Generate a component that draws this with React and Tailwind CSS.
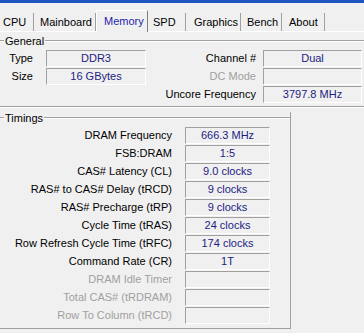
import React from "react";

const Box = ({ children, w }) => (
  <div
    className={
      "h-[17px] shrink-0 border border-t-[#a0a0a0] border-l-[#a0a0a0] border-r-white border-b-white flex items-center justify-center text-[#1c1c84] leading-none " +
      w
    }
  >
    {children}
  </div>
);

const tabs = [
  { name: "CPU", w: "w-[34px]", pl: "pl-[3px]" },
  { name: "Mainboard", w: "w-[62px]", pl: "pl-[6px]" },
  { name: "Memory", w: "w-[52px]", pl: "pl-[7px]", sel: true },
  { name: "SPD", w: "w-[38px]", pl: "pl-[5px]" },
  { name: "Graphics", w: "w-[55px]", pl: "pl-[8px]" },
  { name: "Bench", w: "w-[41px]", pl: "pl-[6px]" },
  { name: "About", w: "w-[43px]", pl: "pl-[7px]" },
];

const timings = [
  ["DRAM Frequency", "666.3 MHz"],
  ["FSB:DRAM", "1:5"],
  ["CAS# Latency (CL)", "9.0 clocks"],
  ["RAS# to CAS# Delay (tRCD)", "9 clocks"],
  ["RAS# Precharge (tRP)", "9 clocks"],
  ["Cycle Time (tRAS)", "24 clocks"],
  ["Row Refresh Cycle Time (tRFC)", "174 clocks"],
  ["Command Rate (CR)", "1T"],
  ["DRAM Idle Timer", "", true],
  ["Total CAS# (tRDRAM)", "", true],
  ["Row To Column (tRCD)", "", true],
];

const Header = ({ title }) => (
  <div className="h-[12px] flex items-center">
    <div className="w-[4px] h-[2px] border-t border-t-[#a0a0a0] border-b border-b-white" />
    <span className="px-[1px] leading-none text-black">{title}</span>
    <div className="flex-1 h-[2px] border-t border-t-[#a0a0a0] border-b border-b-white" />
  </div>
);

export default function App() {
  return (
    <div className="w-[364px] h-[333px] overflow-hidden bg-[#f0f0f0] font-['Liberation_Sans',Arial,sans-serif] text-[11px] text-black">
      <div className="h-[3px] bg-[#1f55c0]" />
      <div className="h-[28px] flex items-end">
        {tabs.map((t) =>
          t.sel ? (
            <div
              key={t.name}
              className={
                "h-[22px] flex items-center border-t border-l border-t-white border-l-white border-r border-r-[#808080] text-[#2424a8] -mb-px bg-[#f0f0f0] relative z-10 " +
                t.w +
                " " +
                t.pl
              }
            >
              <span className="leading-none pb-[1px]">{t.name}</span>
            </div>
          ) : (
            <div
              key={t.name}
              className={"h-[18px] flex items-center border-r border-r-[#a0a0a0] " + t.w + " " + t.pl}
            >
              <span className="leading-none pt-[1px]">{t.name}</span>
            </div>
          )
        )}
      </div>
      <div className="border-t border-t-white">
        <div className="mt-[3px] pb-[3px] border-b border-b-[#a0a0a0]">
          <Header title="General" />
          <div className="mt-[3px] flex flex-col gap-px">
            <div className="h-[17px] flex items-center">
              <div className="w-[33px] text-right">Type</div>
              <div className="w-[13px]" />
              <Box w="w-[100px]">DDR3</Box>
              <div className="flex-1 text-right pr-[7px]">Channel #</div>
              <Box w="w-[99px]">Dual</Box>
              <div className="w-[2px]" />
            </div>
            <div className="h-[17px] flex items-center">
              <div className="w-[33px] text-right">Size</div>
              <div className="w-[13px]" />
              <Box w="w-[100px]">16 GBytes</Box>
              <div className="flex-1 text-right pr-[7px] text-[#a0a0a0]">DC Mode</div>
              <Box w="w-[99px]"></Box>
              <div className="w-[2px]" />
            </div>
            <div className="h-[17px] flex items-center">
              <div className="flex-1 text-right pr-[7px]">Uncore Frequency</div>
              <Box w="w-[99px]">3797.8 MHz</Box>
              <div className="w-[2px]" />
            </div>
          </div>
        </div>
        <div className="h-px bg-white" />
        <div className="mt-[4px] w-[291px] border-r border-r-[#a0a0a0] border-b border-b-[#a0a0a0] pb-[4px]">
          <Header title="Timings" />
          <div className="mt-[3px] flex flex-col gap-px">
            {timings.map(([label, val, dis]) => (
              <div key={label} className="h-[17px] flex items-center">
                <div className={"w-[172px] text-right whitespace-nowrap " + (dis ? "text-[#a0a0a0]" : "text-black")}>
                  {label}
                </div>
                <div className="w-[13px]" />
                <Box w="w-[85px]">{val}</Box>
              </div>
            ))}
          </div>
        </div>
      </div>
    </div>
  );
}
